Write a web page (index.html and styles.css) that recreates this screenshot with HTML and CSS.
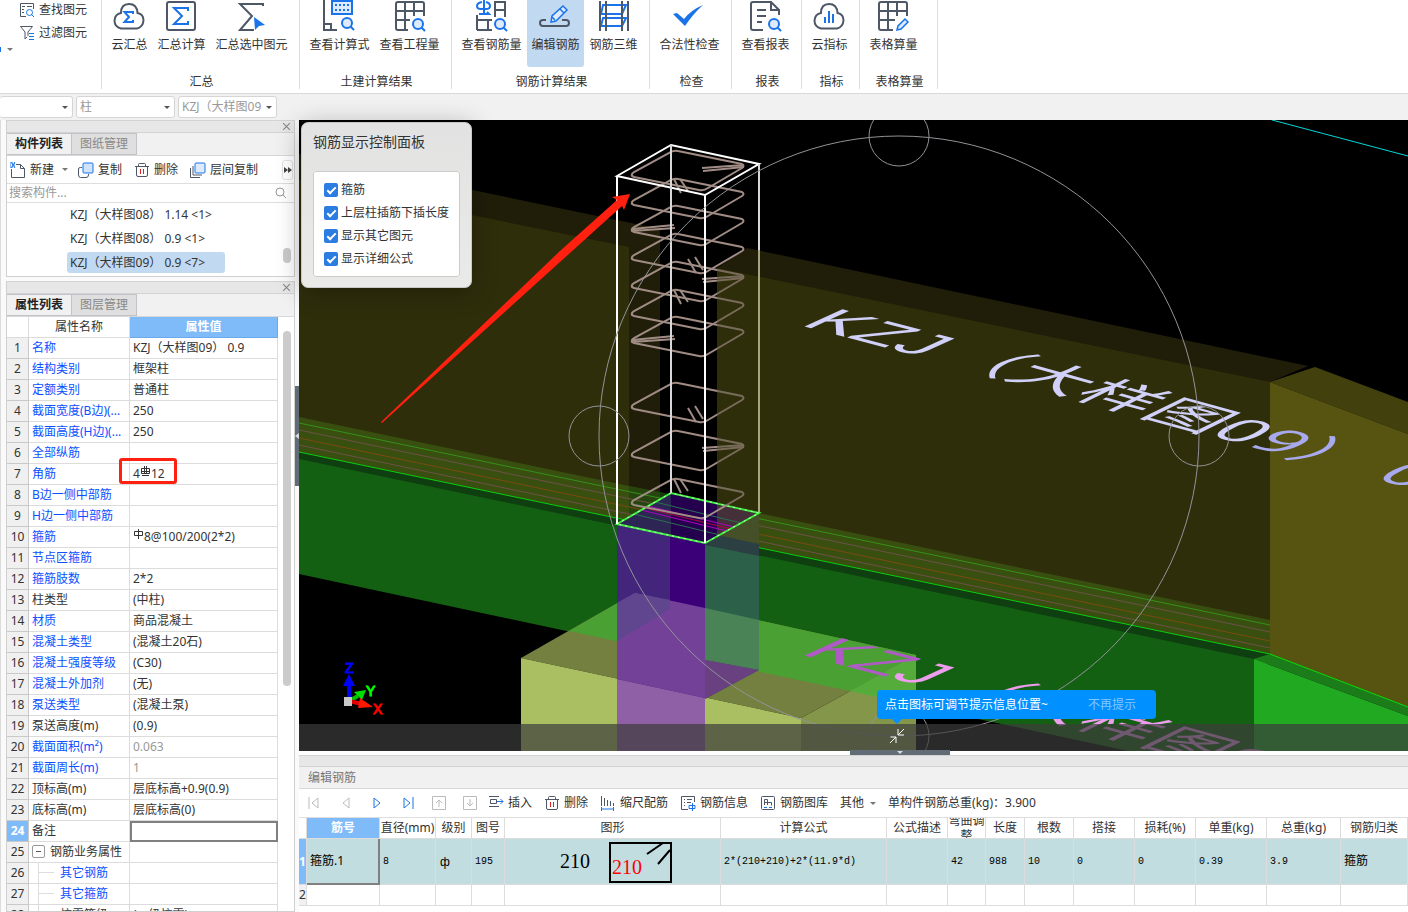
FILE: index.html
```
<!DOCTYPE html>
<html lang="zh-CN">
<head>
    <meta charset="UTF-8">
    <meta name="viewport" content="width=device-width, initial-scale=1.0">
    <title>编辑钢筋</title>
    <link rel="stylesheet" href="styles.css">
</head>
<body>
    <!-- Shared icons -->
    <svg class="defs" width="0" height="0">
        <symbol id="mag" viewBox="0 0 14 14">
            <circle cx="6" cy="6" r="5" fill="#deebfc" stroke="#1a73e8" stroke-width="2"/>
            <path d="M9.500 9.500L13 13" stroke="#1a73e8" stroke-width="2"/>
        </symbol>
        <symbol id="trash" viewBox="0 0 16 16">
            <g fill="none" stroke="#4e5766">
                <path d="M1 4.500H15M4.500 4V2.500Q4.500 1.500 5.500 1.500H10.500Q11.500 1.500 11.500 2.500V4M2.500 5V13Q2.500 14.500 4 14.500H12Q13.500 14.500 13.500 13V5"/>
                <path d="M6.500 7V12M9.500 7V12" stroke="#e02020"/>
            </g>
        </symbol>
        <symbol id="close" viewBox="0 0 8 8">
            <path d="M1 1L7 7M7 1L1 7" stroke="#888"/>
        </symbol>
    </svg>

    <!-- Ribbon -->
    <header class="ribbon">
        <div class="group small">
            <button class="tool"><svg viewBox="0 0 16 16"><g fill="none" stroke="#4e5766"><path d="M7 14.500H1.500V1.500H14.500V7M3 4.500H6M8 4.500H13M3 7.500H5M3 10.500H5"/></g><circle cx="10.500" cy="10.500" r="3" fill="none" stroke="#1a73e8"/><path d="M12.500 12.500L15 15" stroke="#1a73e8"/></svg>查找图元</button>
            <button class="tool"><svg viewBox="0 0 16 16"><path d="M1.500 1.500H13.500L9 7V11M6 14V7L1.500 1.500M6 14L8 12" fill="none" stroke="#4e5766"/><path d="M10 8.500H15M10 11.500H15M10 14.500H15" stroke="#1a73e8"/></svg>过滤图元</button>
            <button class="more" aria-label="更多"><span class="bars"></span><span class="caret"></span></button>
        </div>
        <div class="group calc">
            <div class="tools">
                <button class="big"><svg viewBox="0 0 32 32"><path d="M8 28.500Q1.500 27 1.500 20.500Q2 14 8 13Q8 4 16 4Q24 4 24.500 13Q30.500 14 30.500 20.500Q30 27 24 28.500Z" fill="none" stroke="#4e5766" stroke-width="2"/><path d="M20 14V12H11.500L16 17L11.500 22H20V20" fill="none" stroke="#1a73e8" stroke-width="2"/></svg>云汇总</button>
                <button class="big"><svg viewBox="0 0 32 32"><rect x="2" y="2" width="28" height="28" rx="2" fill="none" stroke="#4e5766" stroke-width="2"/><path d="M23 11V8H9L17 16L9 24H23V21" fill="none" stroke="#1a73e8" stroke-width="2"/></svg>汇总计算</button>
                <button class="big"><svg viewBox="0 0 32 32"><path d="M27 6V4H4L16 16L4 30H18" fill="none" stroke="#4e5766" stroke-width="2"/><path d="M18 17L29 25L23 26L19 30Z" fill="#1a73e8"/></svg>汇总选中图元</button>
            </div>
            <p>汇总</p>
        </div>
        <div class="group civil">
            <div class="tools">
                <button class="big"><svg viewBox="0 0 32 32"><path d="M1 0V30H14M1 24H8V30" fill="none" stroke="#4e5766" stroke-width="2"/><rect x="9" y="1" width="20" height="13" fill="#deebfc" stroke="#1a73e8" stroke-width="2"/><path d="M12 5H27M12 10H27" stroke="#1a73e8" stroke-width="2" stroke-dasharray="2 2"/><use href="#mag" x="18" y="17" width="14" height="14"/></svg>查看计算式</button>
                <button class="big"><svg viewBox="0 0 32 32"><path d="M14 30H4Q2 30 2 28V4Q2 2 4 2H28Q30 2 30 4V16M2 11H30M2 20H16M11 2V30M20 2V16" fill="none" stroke="#4e5766" stroke-width="2"/><use href="#mag" x="18" y="18" width="14" height="14"/></svg>查看工程量</button>
            </div>
            <p>土建计算结果</p>
        </div>
        <div class="group calc">
            <div class="tools">
                <button class="big"><svg viewBox="0 0 32 32"><path d="M9 0V14M7 2Q2 3 2 6Q2 9 6 9H11Q15 9 15 6Q15 3 11 2M4 14H14L12 12" fill="none" stroke="#1a73e8" stroke-width="2"/><path d="M20 17V2H30V17M20 10H30M2 15V30M2 20H17M13 20V30M2 30H17" fill="none" stroke="#4e5766" stroke-width="2"/><use href="#mag" x="19" y="18" width="14" height="14"/></svg>查看钢筋量</button>
                <button class="big active"><svg viewBox="0 0 32 32"><path d="M7 20H4Q1 20 1 23Q1 26 4 26H27Q30 26 30 23Q30 20 27 20H23" fill="none" stroke="#4e5766" stroke-width="2"/><path d="M12 22L13 16L24 6L28 10L17 21ZM21 9L25 13M13 17L16 20" fill="#deebfc" stroke="#1a73e8" stroke-width="1.500"/></svg>编辑钢筋</button>
                <button class="big"><svg viewBox="0 0 32 32"><path d="M5 5H28L24 14H3ZM5 18H28L24 26H3Z" fill="none" stroke="#1a73e8" stroke-width="2"/><path d="M2 1V31M8 1V31M24 1V31M30 1V31" stroke="#4e5766" stroke-width="2"/></svg>钢筋三维</button>
            </div>
            <p>钢筋计算结果</p>
        </div>
        <div class="group check">
            <div class="tools">
                <button class="big"><svg viewBox="0 0 32 32"><path d="M0 14L4 13L11 19Q18 10 30 5Q20 14 12 26Z" fill="#1a73e8"/></svg>合法性检查</button>
            </div>
            <p>检查</p>
        </div>
        <div class="group report">
            <div class="tools">
                <button class="big"><svg viewBox="0 0 32 32"><path d="M14 30H4Q2 30 2 28V4Q2 2 4 2H22L30 10V15M22 2V10H30M8 10H17M8 16H17M8 22H13" fill="none" stroke="#4e5766" stroke-width="2"/><use href="#mag" x="19" y="18" width="14" height="14"/></svg>查看报表</button>
            </div>
            <p>报表</p>
        </div>
        <div class="group index">
            <div class="tools">
                <button class="big"><svg viewBox="0 0 32 32"><path d="M8 28.500Q1.500 27 1.500 20.500Q2 14 8 13Q8 4 16 4Q24 4 24.500 13Q30.500 14 30.500 20.500Q30 27 24 28.500Z" fill="none" stroke="#4e5766" stroke-width="2"/><path d="M12 17V23M16 11V23M20 14V23" stroke="#1a73e8" stroke-width="2"/></svg>云指标</button>
            </div>
            <p>指标</p>
        </div>
        <div class="group sheet">
            <div class="tools">
                <button class="big"><svg viewBox="0 0 32 32"><path d="M16 30H4Q2 30 2 28V4Q2 2 4 2H28Q30 2 30 4V16M2 11H30M2 20H18M11 2V30M20 2V16" fill="none" stroke="#4e5766" stroke-width="2"/><path d="M20 30L21 26L28 19L31 22L24 29Z" fill="#deebfc" stroke="#1a73e8" stroke-width="1.500"/></svg>表格算量</button>
            </div>
            <p>表格算量</p>
        </div>
    </header>

    <!-- Element selectors -->
    <div class="selectors">
        <label class="picker first"><select aria-label="楼层"><option></option></select></label>
        <label class="picker"><select aria-label="构件类型"><option>柱</option></select></label>
        <label class="picker"><select aria-label="构件"><option>KZJ（大样图09</option></select></label>
    </div>

    <div class="workspace">
        <aside class="dock">
            <section class="panel">
                <div class="strip"><button aria-label="关闭"><svg width="9" height="9"><use href="#close"/></svg></button></div>
                <div class="tabs"><button class="on">构件列表</button><button>图纸管理</button></div>
                <div class="bar">
                    <button class="tool new"><svg viewBox="0 0 16 16"><path d="M6 2.500H10.500L14.500 6.500V15.500H1.500V7M10.500 2.500V6.500H14.500" fill="none" stroke="#4e5766"/><path d="M0 1H6M0 3H6M0 5H6" stroke="#1a73e8" stroke-dasharray="1 1"/><path d="M1 0L5 6M5 0L1 6" stroke="#1a73e8"/></svg>新建<span class="caret"></span></button>
                    <button class="tool"><svg viewBox="0 0 16 16"><path d="M4 5.500H2.500Q.500 5.500 .500 7V13Q.500 15.500 2.500 15.500H8Q10.500 15.500 10.500 13V12" fill="none" stroke="#4e5766"/><rect x="5" y="1" width="10" height="10" rx="1" fill="#cfe3fb" stroke="#1a73e8"/></svg>复制</button>
                    <button class="tool"><svg viewBox="0 0 16 16"><use href="#trash"/></svg>删除</button>
                    <button class="tool"><svg viewBox="0 0 16 16"><path d="M3 4V13H12M.500 6V15.500H10" fill="none" stroke="#4e5766"/><rect x="5" y="1" width="10" height="10" rx="1" fill="#deebfc" stroke="#1a73e8"/></svg>层间复制</button>
                    <button class="next" aria-label="更多工具"><svg width="8" height="6"><path d="M0 0L4 3L0 6ZM4 0L8 3L4 6Z" fill="#444"/></svg></button>
                </div>
                <div class="search">
                    <input type="text" aria-label="搜索构件" placeholder="搜索构件...">
                    <svg width="12" height="12" viewBox="0 0 12 12"><circle cx="5" cy="5" r="4" fill="none" stroke="#999"/><path d="M8 8L11 11" stroke="#999"/></svg>
                </div>
                <div class="list">
                    <ul>
                        <li>KZJ（大样图08） 1.14 &lt;1&gt;</li>
                        <li>KZJ（大样图08） 0.9 &lt;1&gt;</li>
                        <li class="sel">KZJ（大样图09） 0.9 &lt;7&gt;</li>
                    </ul>
                    <div class="thumb"></div>
                </div>
            </section>

            <section class="panel props">
                <div class="strip"><button aria-label="关闭"><svg width="9" height="9"><use href="#close"/></svg></button></div>
                <div class="tabs"><button class="on">属性列表</button><button>图层管理</button></div>
                <div class="scroll">
                    <table class="attr">
                        <thead><tr><th class="n"></th><th class="k">属性名称</th><th class="v">属性值</th></tr></thead>
                        <tbody>
                            <tr><th>1</th><td class="b">名称</td><td>KZJ（大样图09） 0.9</td></tr>
                            <tr><th>2</th><td class="b">结构类别</td><td>框架柱</td></tr>
                            <tr><th>3</th><td class="b">定额类别</td><td>普通柱</td></tr>
                            <tr><th>4</th><td class="b">截面宽度(B边)(...</td><td>250</td></tr>
                            <tr><th>5</th><td class="b">截面高度(H边)(...</td><td>250</td></tr>
                            <tr><th>6</th><td class="b">全部纵筋</td><td></td></tr>
                            <tr><th>7</th><td class="b">角筋</td><td class="marked">4<svg class="bar-mark" width="11" height="11" viewBox="0 0 11 11"><path d="M1.500 2.500H9.500V7.500H1.500ZM4.500 0V8M6.500 0V8M1 5.500H10M2 9.500H9" fill="none" stroke="#333"/></svg>12</td></tr>
                            <tr><th>8</th><td class="b">B边一侧中部筋</td><td></td></tr>
                            <tr><th>9</th><td class="b">H边一侧中部筋</td><td></td></tr>
                            <tr><th>10</th><td class="b">箍筋</td><td><svg class="bar-mark" width="11" height="11" viewBox="0 0 11 11"><path d="M1.500 2.500H9.500V6.500H1.500ZM5.500 0V10" fill="none" stroke="#333"/></svg>8@100/200(2*2)</td></tr>
                            <tr><th>11</th><td class="b">节点区箍筋</td><td></td></tr>
                            <tr><th>12</th><td class="b">箍筋肢数</td><td>2*2</td></tr>
                            <tr><th>13</th><td>柱类型</td><td>(中柱)</td></tr>
                            <tr><th>14</th><td class="b">材质</td><td>商品混凝土</td></tr>
                            <tr><th>15</th><td class="b">混凝土类型</td><td>(混凝土20石)</td></tr>
                            <tr><th>16</th><td class="b">混凝土强度等级</td><td>(C30)</td></tr>
                            <tr><th>17</th><td class="b">混凝土外加剂</td><td>(无)</td></tr>
                            <tr><th>18</th><td class="b">泵送类型</td><td>(混凝土泵)</td></tr>
                            <tr><th>19</th><td>泵送高度(m)</td><td>(0.9)</td></tr>
                            <tr><th>20</th><td class="b">截面面积(m²)</td><td class="dim">0.063</td></tr>
                            <tr><th>21</th><td class="b">截面周长(m)</td><td class="dim">1</td></tr>
                            <tr><th>22</th><td>顶标高(m)</td><td>层底标高+0.9(0.9)</td></tr>
                            <tr><th>23</th><td>底标高(m)</td><td>层底标高(0)</td></tr>
                            <tr class="current"><th>24</th><td>备注</td><td class="edit"><input type="text" aria-label="备注"></td></tr>
                            <tr><th>25</th><td class="tree"><button aria-label="折叠"></button>钢筋业务属性</td><td></td></tr>
                            <tr><th>26</th><td class="b leaf">其它钢筋</td><td></td></tr>
                            <tr><th>27</th><td class="b leaf">其它箍筋</td><td></td></tr>
                            <tr><th>28</th><td class="leaf">抗震等级</td><td>(一级抗震)</td></tr>
                        </tbody>
                    </table>
                    <div class="thumb"></div>
                </div>
            </section>
            <button class="fold side" aria-label="收起面板"><svg width="4" height="6"><path d="M4 0L0 3L4 6Z" fill="#d5dade"/></svg></button>
        </aside>

        <main class="stage">
            <div class="viewport">
                <svg class="scene" viewBox="299 120 1109 631" preserveAspectRatio="xMinYMin slice">
                    <rect x="299" y="120" width="1109" height="631" fill="#000"/>
                    <path d="M1272 120L1408 156" stroke="#00d8d8"/>

                    <!-- walls -->
                    <path d="M299 154L660 229V520H299Z" fill="#201e09"/>
                    <path d="M299 180L629 247V490H299Z" fill="#2f2e0b"/>
                    <path d="M717 268L747 248L1308 366L1270 382V640H717Z" fill="#201e09"/>
                    <path d="M717 268L1270 382V640L717 510Z" fill="#2f2e0b"/>

                    <!-- beam -->
                    <path d="M299 452L1270 654L1254 751H1128L299 574Z" fill="#146012"/>
                    <path d="M299 417L1270 620V654L299 452Z" fill="#384f10"/>
                    <path d="M629 486L660 492V527L629 521Z" fill="#27450e"/>
                    <path d="M660 492L717 504V539L660 527Z" fill="#123a0a"/>
                    <path d="M299 452L1270 654L1254 659L299 459Z" fill="#0f3f10"/>
                    <g fill="none">
                        <path d="M299 423L1270 625" stroke="#35901a"/>
                        <path d="M299 430L1270 632M299 445L1270 648" stroke="#6e5048"/>
                        <path d="M299 438L1270 641" stroke="#7a4a10"/>
                        <path d="M299 452L1270 654" stroke="#08d010"/>
                    </g>

                    <!-- right block -->
                    <path d="M1270 382L1315 367L1408 402V434Z" fill="#42400d"/>
                    <path d="M1270 382L1408 434V707L1270 654Z" fill="#565410"/>
                    <path d="M1254 659L1270 654L1408 707V716Z" fill="#1c7c1a"/>
                    <path d="M1254 659L1408 716V751H1254Z" fill="#22a922"/>
                    <path d="M1270 654L1408 707" stroke="#0be00b"/>

                    <!-- footing -->
                    <path d="M521 658L635 593L916 655L801 718Z" fill="#73803f"/>
                    <path d="M801 718L916 655V751H801Z" fill="#83964a"/>
                    <path d="M569 631L635 593L916 655L850 691Z" fill="#4ba033"/>
                    <path d="M850 691L916 655V706Z" fill="#56ac3b"/>
                    <path d="M521 658L801 718V751H521Z" fill="#a9bf62"/>

                    <!-- lower column -->
                    <path d="M617 524L705 543V751H617Z" fill="#3b0077"/>
                    <path d="M617 524L670 535V609L617 641Z" fill="#43267c"/>
                    <path d="M617 603L635 593L705 608V698L617 679Z" fill="#744198"/>
                    <path d="M617 603L635 593L670 600V609L617 641Z" fill="#5f468f"/>
                    <path d="M617 679L705 698V751H617Z" fill="#8f60a6"/>
                    <path d="M705 543L759 513V670L705 699Z" fill="#2c6048"/>
                    <path d="M705 543L759 513V556L705 545Z" fill="#2c3f42"/>
                    <path d="M705 543L759 513V544L722 536Z" fill="#455029"/>
                    <path d="M705 608L759 620V670L705 660Z" fill="#4a8356"/>
                    <path d="M705 660L759 670L705 699Z" fill="#6a4180"/>
                    <path d="M617 524L671 493L759 513L705 543Z" fill="#25004f"/>
                    <path d="M617 524L671 493V536Z" fill="#2d2655"/>
                    <path d="M717 503L759 513L717 537Z" fill="#45303a"/>
                    <path d="M655 502L741 523M634 514L720 535" stroke="#2a7050"/>
                    <path d="M648 506L734 527M641 510L727 531" stroke="#b000c0"/>
                    <path d="M645 508L731 529" stroke="#b00040"/>
                    <path d="M617 524L671 493L759 513L705 543Z" fill="none" stroke="#3bf03b" stroke-width="2"/>
                    <path d="M617 524L671 493L759 513L705 543Z" fill="none" stroke="#d8ffd8" stroke-dasharray="2 4"/>

                    <!-- labels laid on the beam tops -->
                    <g font-size="100">
                        <g class="latin">
                            <text transform="matrix(.69 .18 -.55 .25 799 325)" fill="#d0d0f8">KZJ</text>
                            <text transform="matrix(.69 .18 -.55 .25 799 654)" fill="#b05ac8">KZ<tspan fill="#ee9cee">J</tspan></text>
                        </g>
                        <text transform="matrix(.68 .188 -.51 .25 934 359)" fill="#d0d0f8">（大样图0</text>
                        <text transform="matrix(.68 .188 -.51 .25 1245 445)" fill="#a9a9ee">9）</text>
                        <text transform="matrix(.68 .188 -.51 .25 1372 478)" fill="#a9a9ee">0</text>
                        <text transform="matrix(.68 .188 -.51 .25 934 688)" fill="#ee9cee">（大样图0</text>
                    </g>

                    <!-- stirrups -->
                    <defs>
                        <path id="hoop" d="M632 176Q631 174 634 172L671 152Q674 150 678 151L742 164Q745 166 742 168L708 188Q704 191 699 190L634 177Z"/>
                        <path id="hookR" d="M744 165L702 168M744 167L703 171"/>
                        <path id="hookL" d="M632 174L674 170M632 176L675 173"/>
                        <path id="hookT" d="M674 151L681 165M680 151L688 163"/>
                        <path id="hookB" d="M688 176L696 190M695 174L703 187"/>
                    </defs>
                    <g fill="none" stroke="#a08c84" stroke-width="2">
                        <use href="#hoop"/><use href="#hookR"/>
                        <use href="#hoop" y="28"/><use href="#hookT" y="28"/>
                        <use href="#hoop" y="55"/><use href="#hookL" y="55"/>
                        <use href="#hoop" y="83"/><use href="#hookB" y="83"/>
                        <use href="#hoop" y="111"/><use href="#hookR" y="111"/>
                        <use href="#hoop" y="139"/><use href="#hookT" y="139"/>
                        <use href="#hoop" y="166"/><use href="#hookL" y="166"/>
                        <use href="#hoop" y="232"/><use href="#hookB" y="232"/>
                        <use href="#hoop" y="280"/><use href="#hookR" y="280"/>
                        <use href="#hoop" y="328"/><use href="#hookT" y="328"/>
                    </g>
                    <path d="M717 268L759 277V512L717 503Z" fill="#2f2e0b" opacity=".35"/>

                    <!-- column frame -->
                    <g fill="none" stroke="#fff" stroke-width="2">
                        <path d="M617 176L671 145L759 164L705 195ZM617 176V524M705 195V543"/>
                        <path d="M671 145V493" stroke="#d8d8d8"/>
                        <path d="M759 164V250" stroke="#d8d8d8"/>
                        <path d="M759 250V512" stroke="#a8a47c"/>
                    </g>

                    <!-- orbit -->
                    <g fill="none" stroke="#929298">
                        <circle cx="899" cy="436" r="300"/>
                        <circle cx="899" cy="136" r="30"/>
                        <circle cx="599" cy="436" r="30"/>
                        <circle cx="1199" cy="436" r="30"/>
                        <circle cx="899" cy="736" r="30"/>
                    </g>

                    <!-- axes -->
                    <g class="latin" font-size="14">
                        <path d="M349 702V684" stroke="#0000f0" stroke-width="4"/><path d="M343 686L349 674L355 686Z" fill="#0000ff"/>
                        <path d="M349 701L358 696" stroke="#00c000" stroke-width="4"/><path d="M354 692L366 690L362 700Z" fill="#00e000"/>
                        <path d="M349 701L362 704" stroke="#e00000" stroke-width="4"/><path d="M360 698L373 707L358 708Z" fill="#ff1800"/>
                        <rect x="344" y="697" width="8" height="9" fill="#c8c8c8"/>
                        <text x="345" y="673" fill="#0000ff" stroke="#0000ff">Z</text>
                        <text x="366" y="696" fill="#00ff00" stroke="#00ff00">Y</text>
                        <text x="373" y="714" fill="#ff0000" stroke="#ff0000">X</text>
                    </g>

                    <path d="M381 422L560 251L617 200L612 197L630 194L624 210L622 206L560 262L382 423Z" fill="#ff2010"/>
                </svg>

                <form class="control">
                    <h2>钢筋显示控制面板</h2>
                    <fieldset>
                        <label><input type="checkbox" checked>箍筋</label>
                        <label><input type="checkbox" checked>上层柱插筋下插长度</label>
                        <label><input type="checkbox" checked>显示其它图元</label>
                        <label><input type="checkbox" checked>显示详细公式</label>
                    </fieldset>
                </form>

                <div class="status">
                    <button class="shrink" aria-label="收起提示"><svg width="16" height="16" viewBox="0 0 16 16"><path d="M15 1L9 7M9 1V7H15M1 15L7 9M1.500 9H7V15" fill="none" stroke="#fff"/></svg></button>
                    <div class="tip"><span>点击图标可调节提示信息位置~</span><button>不再提示</button></div>
                </div>
            </div>

            <section class="rebar">
                <button class="fold" aria-label="收起"><svg width="6" height="3"><path d="M0 0H6L3 3Z" fill="#d5dade"/></svg></button>
                <div class="strip"></div>
                <h2>编辑钢筋</h2>
                <div class="bar">
                    <button class="nav" aria-label="首个"><svg viewBox="0 0 16 16"><path d="M2 2V14M11 3V13L5 8Z" fill="none" stroke="#bbb"/></svg></button>
                    <button class="nav" aria-label="上一个"><svg viewBox="0 0 16 16"><path d="M11 3V13L5 8Z" fill="none" stroke="#bbb"/></svg></button>
                    <button class="nav" aria-label="下一个"><svg viewBox="0 0 16 16"><path d="M5 3V13L11 8Z" fill="none" stroke="#1a73e8"/></svg></button>
                    <button class="nav" aria-label="末个"><svg viewBox="0 0 16 16"><path d="M13 2V14M4 3V13L10 8Z" fill="none" stroke="#1a73e8"/></svg></button>
                    <button class="nav" aria-label="上移"><svg viewBox="0 0 16 16"><path d="M1.500 1.500H14.500V14.500H1.500ZM8 12V5M5 8L8 5L11 8" fill="none" stroke="#bbb"/></svg></button>
                    <button class="nav" aria-label="下移"><svg viewBox="0 0 16 16"><path d="M1.500 1.500H14.500V14.500H1.500ZM8 4V11M5 8L8 11L11 8" fill="none" stroke="#bbb"/></svg></button>
                    <button class="tool"><svg viewBox="0 0 16 16"><path d="M1 1.500H11M1 11.500H11M2.500 4.500H8.500V8.500H2.500Z" fill="none" stroke="#4e5766"/><path d="M9 6.500H15M12.500 4L15 6.500L12.500 9" fill="none" stroke="#1a73e8"/></svg>插入</button>
                    <button class="tool"><svg viewBox="0 0 16 16"><use href="#trash"/></svg>删除</button>
                    <button class="tool"><svg viewBox="0 0 16 16"><path d="M1.500 1V11M4.500 3V11M7.500 5V11M10.500 6V11M13.500 8V11" stroke="#4e5766"/><path d="M1.500 12V16M13.500 12V16M1 14H14" stroke="#1a73e8"/></svg>缩尺配筋</button>
                    <button class="tool"><svg viewBox="0 0 16 16"><path d="M8 14.500H1.500V1.500H14.500V7M4 4.500H5M7 4.500H12M4 7.500H5M7 7.500H11M4 10.500H5" fill="none" stroke="#4e5766"/><path d="M9 10.500H15V13.500H9ZM12.500 8V16" fill="none" stroke="#1a73e8"/></svg>钢筋信息</button>
                    <button class="tool"><svg viewBox="0 0 16 16"><rect x="1.500" y="1.500" width="13" height="13" rx="1" fill="none" stroke="#4e5766"/><path d="M4.500 10V4.500H7.500V10M4 7.500H11.500V10.500" fill="none" stroke="#4e5766"/><path d="M4 12.500H7M9 12.500H12" stroke="#1a73e8"/></svg>钢筋图库</button>
                    <button class="tool other">其他<span class="caret"></span></button>
                    <span class="total">单构件钢筋总重(kg)：3.900</span>
                </div>
                <table class="bars-table">
                    <colgroup>
                        <col class="w7"><col class="w73"><col class="w56"><col class="w36"><col class="w33"><col class="w216"><col class="w166"><col class="w61"><col class="w38"><col class="w39"><col class="w49"><col class="w61"><col class="w61"><col class="w71"><col class="w74"><col>
                    </colgroup>
                    <thead>
                        <tr><th></th><th class="key">筋号</th><th>直径(mm)</th><th>级别</th><th>图号</th><th>图形</th><th>计算公式</th><th>公式描述</th><th><div class="wrap">弯曲调整</div></th><th>长度</th><th>根数</th><th>搭接</th><th>损耗(%)</th><th>单重(kg)</th><th>总重(kg)</th><th>钢筋归类</th></tr>
                    </thead>
                    <tbody>
                        <tr class="filled">
                            <th>1</th><td class="name">箍筋.1</td><td>8</td><td class="grade">ф</td><td>195</td>
                            <td class="shape"><svg width="216" height="44" viewBox="505 839 216 44"><rect x="610" y="842" width="61" height="39" fill="none" stroke="#000" stroke-width="2"/><path d="M647 853L663 842M658 863L670 849" stroke="#000" stroke-width="2"/><text x="560" y="867">210</text><text x="612" y="873" fill="#f00">210</text></svg></td>
                            <td>2*(210+210)+2*(11.9*d)</td><td></td><td>42</td><td>988</td><td>10</td><td>0</td><td>0</td><td>0.39</td><td>3.9</td><td>箍筋</td>
                        </tr>
                        <tr><th>2</th><td></td><td></td><td></td><td></td><td></td><td></td><td></td><td></td><td></td><td></td><td></td><td></td><td></td><td></td><td></td></tr>
                    </tbody>
                </table>
            </section>
        </main>
    </div>
</body>
</html>
```
FILE: styles.css
```
*, *::before, *::after {
    box-sizing: border-box;
}
body {
    margin: 0;
    height: 100vh;
    display: flex;
    flex-direction: column;
    overflow: hidden;
    background: #f1f1f1;
    color: #333;
    font-family: "Noto Sans", "Noto Sans CJK SC", sans-serif;
    font-size: 12px;
    line-height: 18px;
}
button, input, select {
    font: inherit;
    color: inherit;
    background: none;
    border: none;
    padding: 0;
    margin: 0;
}
h2, p, ul {
    margin: 0;
    padding: 0;
    font-size: 12px;
    font-weight: normal;
}
svg {
    display: block;
    flex: none;
}
.defs {
    position: absolute;
}
.caret {
    width: 6px;
    border: 3px solid transparent;
    border-top-color: #777;
    border-bottom: none;
}

/* Ribbon */
.ribbon {
    display: flex;
    flex: none;
    height: 94px;
    padding-bottom: 4px;
    background: #fff;
    border-bottom: 1px solid #d8d8d8;
}
.group {
    display: flex;
    flex-direction: column;
    justify-content: space-between;
    border-right: 1px solid #dcdcdc;
}
.group p {
    padding-left: 2px;
    line-height: 14px;
    text-align: center;
}
.small {
    width: 102px;
    justify-content: flex-start;
    padding-left: 19px;
    padding-top: 1px;
    gap: 5px;
}
.small .more {
    display: flex;
    align-items: center;
    gap: 6px;
    margin-left: -19px;
}
.bars {
    width: 1px;
    height: 5px;
    background: #1a73e8;
}
.calc { width: 198px; }
.civil { width: 152px; }
.check { width: 82px; }
.report { width: 70px; }
.index { width: 58px; }
.sheet { width: 78px; }
.tools {
    display: flex;
    justify-content: center;
    gap: 2px;
    padding-right: 2px;
}
.sheet .tools {
    padding-right: 10px;
}
.big {
    display: flex;
    flex-direction: column;
    align-items: center;
    gap: 4px;
    height: 67px;
    padding: 0 4px;
    white-space: nowrap;
    border-radius: 0 0 3px 3px;
}
.big svg {
    width: 32px;
    height: 32px;
    overflow: visible;
}
.big.active {
    background: #c2d9f2;
}
.tool {
    display: flex;
    align-items: center;
    gap: 4px;
    white-space: nowrap;
}
.tool svg {
    width: 16px;
    height: 16px;
}

/* Selector row */
.selectors {
    display: flex;
    flex: none;
    gap: 3px;
    height: 26px;
    padding-top: 2px;
}
.picker {
    position: relative;
    width: 99px;
    height: 22px;
    background: #fff;
    border: 1px solid #d5d5d5;
    border-radius: 3px;
}
.picker.first {
    width: 73px;
    border-left: none;
}
.picker select {
    width: 100%;
    height: 20px;
    padding-left: 3px;
    appearance: none;
    color: #999;
}
.picker::after {
    content: "";
    position: absolute;
    right: 4px;
    top: 9px;
    border: 3px solid transparent;
    border-top-color: #555;
    border-bottom: none;
}

/* Left dock */
.workspace {
    display: flex;
    flex: 1;
    min-height: 0;
}
.dock {
    position: relative;
    display: flex;
    flex: none;
    flex-direction: column;
    gap: 4px;
    width: 299px;
    padding: 0 4px 0 5px;
    background: #fafafa;
    border-left: 1px solid #dcdcdc;
}
.panel {
    border: 1px solid #d0d0d0;
    border-top: none;
    background: #fff;
}
.props {
    flex: 1;
    min-height: 0;
    overflow: hidden;
}
.strip {
    height: 12px;
    background: #e7e7e7;
    border: 1px solid #d3d3d3;
    border-width: 1px 0;
}
.panel .strip {
    height: 13px;
}
.strip button {
    display: block;
    margin: 1px 3px 0 auto;
}
.tabs {
    display: flex;
    height: 23px;
    background: #f1f1f1;
    border-bottom: 1px solid #d8d8d8;
}
.tabs button {
    width: 65px;
    background: #dfdfdf;
    border: 1px solid #c2c2c8;
    border-left: none;
    color: #888;
}
.tabs .on {
    background: #f1f1f1;
    color: #222;
    font-weight: bold;
}
.bar {
    display: flex;
    align-items: center;
    gap: 12px;
    height: 28px;
    padding-left: 3px;
    background: #fff;
    border-bottom: 1px solid #dedede;
}
.new {
    width: 56px;
}
.new .caret {
    margin-left: 4px;
}
.next {
    display: flex;
    align-items: center;
    justify-content: center;
    width: 11px;
    height: 20px;
    margin: 0 1px 0 auto;
    border: 1px solid #e2e2e2;
    border-radius: 3px;
}
.search {
    display: flex;
    align-items: center;
    height: 19px;
    padding: 0 7px 0 2px;
    border-bottom: 1px solid #dedede;
}
.search input {
    flex: 1;
    min-width: 0;
    outline: none;
}
.search input::placeholder {
    color: #999;
}
.list {
    display: flex;
    justify-content: space-between;
    align-items: flex-end;
    height: 73px;
    padding: 1px 3px 0 60px;
}
.list ul {
    display: flex;
    flex-direction: column;
    gap: 3px;
    align-self: flex-start;
    list-style: none;
}
.list li {
    width: 158px;
    padding: 0 3px;
    line-height: 21px;
    white-space: pre;
}
.list .sel {
    background: #c2d9f2;
    border-radius: 3px;
}
.thumb {
    width: 8px;
    background: #cbcbcb;
    border-radius: 4px;
}
.list .thumb {
    height: 15px;
    margin-bottom: 13px;
}
.scroll {
    display: flex;
    justify-content: space-between;
    padding-right: 3px;
}
.scroll .thumb {
    height: 355px;
    margin-top: 14px;
}

/* Attribute table */
.attr {
    width: 271px;
    table-layout: fixed;
    border-collapse: separate;
    border-spacing: 0;
}
.attr th, .attr td {
    height: 21px;
    padding: 0 3px;
    border: 1px solid #dcdcdc;
    border-width: 0 1px 1px 0;
    font-weight: normal;
    line-height: 18px;
    text-align: left;
    white-space: nowrap;
}
.attr thead th {
    text-align: center;
}
.attr .n { width: 22px; }
.attr .k { width: 101px; }
.attr .v {
    background: #80bbf9;
    border-color: #6ba9ea;
    color: #fff;
    font-weight: bold;
}
.attr tbody th {
    padding: 0;
    background: #f0f0f0;
    border-color: #c9c9c9;
    text-align: center;
}
.attr .b { color: #0c50ff; }
.attr .dim { color: #999; }
.attr .current th {
    background: #80bbf9;
    color: #fff;
    font-weight: bold;
}
.attr .edit {
    padding: 0;
    border: 2px solid #808080;
}
.edit input {
    display: block;
    width: 100%;
    height: 16px;
    outline: none;
}
.bar-mark {
    display: inline-block;
    vertical-align: 1px;
}
.marked {
    position: relative;
}
.marked::after {
    content: "";
    position: absolute;
    left: -11px;
    top: -6px;
    width: 58px;
    height: 26px;
    border: 3px solid #ff2010;
    border-radius: 3px;
}
.tree button {
    width: 13px;
    height: 13px;
    margin-right: 5px;
    border: 1px solid #999;
    border-radius: 2px;
    vertical-align: -1px;
    background: linear-gradient(#555, #555) center / 5px 1px no-repeat;
}
.attr .leaf {
    padding-left: 31px;
    background: linear-gradient(#ddd, #ddd) 9px 9px / 16px 1px no-repeat, linear-gradient(#ddd, #ddd) 9px 0 / 1px 100% no-repeat;
}

.fold {
    position: absolute;
    display: flex;
    align-items: center;
    justify-content: center;
    background: #626c77;
}
.side {
    right: 0;
    top: 266px;
    width: 4px;
    height: 100px;
}

/* 3D view */
.stage {
    display: flex;
    flex: 1;
    flex-direction: column;
    min-width: 0;
}
.viewport {
    position: relative;
    flex: 1;
    min-height: 0;
}
.scene {
    width: 100%;
    height: 100%;
}
.latin {
    font-family: "Liberation Sans", sans-serif;
}
.control {
    position: absolute;
    left: 2px;
    top: 2px;
    padding: 10px 11px;
    background: linear-gradient(#e2e2e2, #eaeae8);
    border: 1px solid #c8c8c8;
    border-radius: 7px;
    box-shadow: 0 4px 26px rgba(0, 0, 0, 0.3);
}
.control h2 {
    margin-bottom: 20px;
    font-size: 14px;
}
.control fieldset {
    width: 147px;
    margin: 0;
    padding: 6px 0 6px 10px;
    background: #fff;
    border: 1px solid #ccc;
    border-radius: 3px;
}
.control label {
    display: flex;
    align-items: center;
    gap: 3px;
    height: 23px;
    white-space: nowrap;
}
.control input {
    appearance: none;
    width: 14px;
    height: 14px;
    border-radius: 2px;
    background: #2b7de1;
}
.control input:checked::before {
    content: "";
    display: block;
    width: 9px;
    height: 5px;
    margin: 4px 3px;
    border: solid #fff;
    border-width: 0 0 2px 2px;
    transform: rotate(-45deg);
}
.status {
    position: absolute;
    left: 0;
    right: 0;
    bottom: 0;
    height: 27px;
    padding-left: 590px;
    background: rgba(60, 60, 60, 0.7);
}
.shrink {
    display: block;
    margin-top: 4px;
}
.tip {
    position: absolute;
    left: 578px;
    bottom: 32px;
    display: flex;
    justify-content: space-between;
    align-items: center;
    width: 279px;
    height: 29px;
    padding: 0 20px 0 8px;
    background: #0090ff;
    border-radius: 4px;
    color: #fff;
}
.tip button {
    color: #80c7ff;
}
.tip::after {
    content: "";
    position: absolute;
    left: 15px;
    top: 29px;
    border: 5px solid transparent;
    border-top-color: #0090ff;
    border-bottom: none;
}

/* Rebar editor */
.rebar {
    position: relative;
    flex: none;
    min-height: 161px;
    padding: 4px 0 6px;
    background: #fff;
}
.rebar .fold {
    left: 551px;
    top: -1px;
    width: 100px;
    height: 5px;
}
.rebar h2 {
    height: 22px;
    padding-left: 9px;
    background: #f1f1f1;
    border-bottom: 1px solid #d8d8d8;
    line-height: 21px;
    color: #777;
}
.rebar .bar {
    height: 29px;
    padding-left: 0;
}
.nav {
    display: flex;
    justify-content: center;
    width: 31px;
    margin-right: -12px;
}
.nav svg {
    width: 16px;
    height: 16px;
}
.nav + .tool {
    margin-left: 3px;
}
.other {
    gap: 6px;
}
.bars-table {
    width: 100%;
    table-layout: fixed;
    border-collapse: separate;
    border-spacing: 0;
}
.bars-table th, .bars-table td {
    height: 21px;
    padding: 0;
    border: 1px solid #dcdcdc;
    border-width: 0 1px 1px 0;
    font-weight: normal;
    line-height: 18px;
    white-space: nowrap;
    overflow: hidden;
}
.bars-table tbody th {
    background: #f0f0f0;
}
.bars-table .key, .bars-table .filled th {
    background: #80bbf9;
    color: #fff;
    font-weight: bold;
}
.bars-table .wrap {
    display: flex;
    align-items: center;
    justify-content: center;
    height: 20px;
    line-height: 15px;
    white-space: normal;
}
.bars-table td {
    padding-left: 3px;
    font-family: "Liberation Mono", "Noto Sans CJK SC", monospace;
    font-size: 10px;
    color: #000;
}
.bars-table .filled td {
    height: 46px;
    background: #c1dde0;
}
.bars-table .filled td:last-child {
    font-size: 12px;
}
.bars-table .filled .name {
    border: solid #808080;
    border-width: 0 2px 2px 0;
    font-family: "Noto Sans", "Noto Sans CJK SC", sans-serif;
    font-size: 12px;
}
.bars-table .filled .grade {
    padding-left: 4px;
    font-family: "Liberation Sans", sans-serif;
    font-size: 12px;
}
.bars-table .filled .shape {
    padding: 0;
}
.shape text {
    font-family: "Liberation Serif", serif;
    font-size: 20px;
}
.w7 { width: 8px; }
.w73 { width: 73px; }
.w56 { width: 56px; }
.w36 { width: 36px; }
.w33 { width: 33px; }
.w216 { width: 216px; }
.w166 { width: 166px; }
.w61 { width: 61px; }
.w38 { width: 38px; }
.w39 { width: 39px; }
.w49 { width: 49px; }
.w71 { width: 71px; }
.w74 { width: 74px; }
```
